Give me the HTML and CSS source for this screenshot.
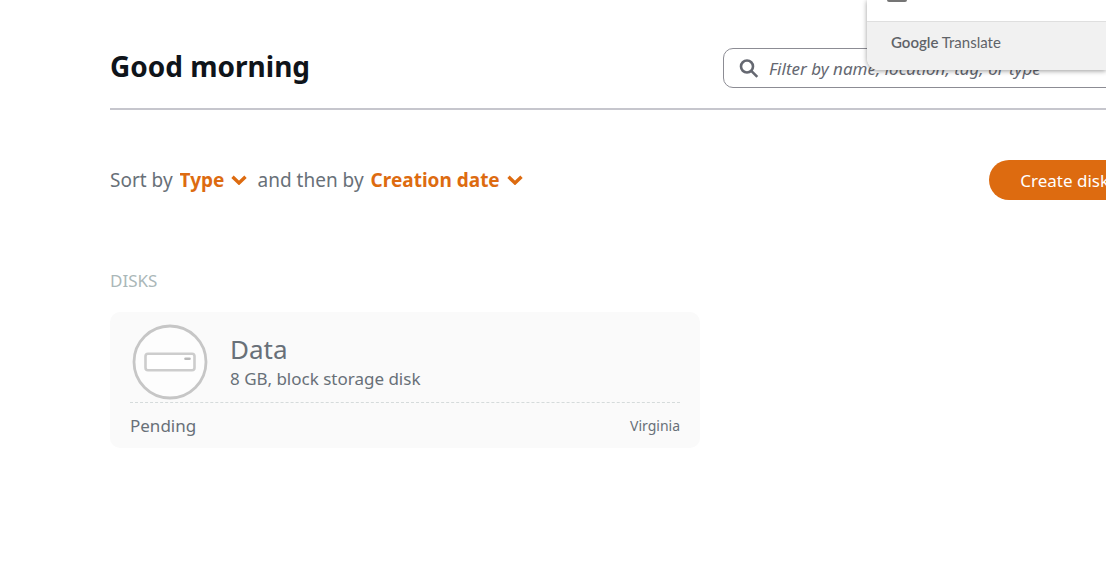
FILE: index.html
```html
<!DOCTYPE html>
<html lang="en">

<head>
    <meta charset="utf-8">
    <title>Home</title>
    <meta name="viewport" content="width=device-width, initial-scale=1">
    <link rel="stylesheet" href="styles.css">
</head>

<body>
    <main class="page">
        <header class="header">
            <h1>Good morning</h1>
            <label class="search">
                <svg class="search-icon" viewBox="0 0 20 20" aria-hidden="true">
                    <circle cx="8" cy="8.5" r="6"></circle>
                    <path d="M12.3 12.8L18.3 18.8"></path>
                </svg>
                <input type="search" aria-label="Filter" placeholder="Filter by name, location, tag, or type">
            </label>
        </header>

        <div class="toolbar">
            <div class="sort">
                <label for="sort1">Sort by</label>
                <span class="picker">
                    <select id="sort1"><option>Type</option></select>
                    <svg class="chevron" viewBox="0 0 16 10" aria-hidden="true"><path d="M1.5 1.8L8 8L14.5 1.8"></path></svg>
                </span>
                <label for="sort2" class="then">and then by</label>
                <span class="picker">
                    <select id="sort2"><option>Creation date</option></select>
                    <svg class="chevron" viewBox="0 0 16 10" aria-hidden="true"><path d="M1.5 1.8L8 8L14.5 1.8"></path></svg>
                </span>
            </div>
            <button type="button" class="create">Create disk</button>
        </div>

        <section>
            <h2>DISKS</h2>
            <article class="card">
                <div class="card-top">
                    <svg class="disk-icon" viewBox="0 0 80 80" aria-hidden="true">
                        <circle cx="40" cy="40" r="36" fill="#fdfdfd" stroke="#c6c6c6" stroke-width="2.8"></circle>
                        <rect x="15.5" y="31.7" width="49" height="16.5" rx="2.5" fill="#fff" stroke="#cdcdcd" stroke-width="2.6"></rect>
                        <path d="M55.5 36.7H59.5" stroke="#b9b9b9" stroke-width="2.6" stroke-linecap="round"></path>
                    </svg>
                    <div>
                        <h3>Data</h3>
                        <p class="details">8 GB, block storage disk</p>
                    </div>
                </div>
                <div class="card-bottom">
                    <span>Pending</span>
                    <span class="region">Virginia</span>
                </div>
            </article>
        </section>
    </main>

    <!-- translate popup -->
    <aside class="translate">
        <div class="translate-body"><span class="translate-icon"></span></div>
        <div class="translate-footer"><b>Google</b> Translate</div>
    </aside>
</body>

</html>
```

FILE: styles.css
```css
body {
    margin: 0;
    background-color: #fff;
    color: #687078;
    font-family: "Noto Sans", "Open Sans", sans-serif;
    font-size: 18px;
    overflow: hidden;
}

h1, h2, h3, p {
    margin: 0;
}

.page {
    min-width: 1030px;
    padding: 48px 0 48px 110px;
}

/* header */
.header {
    display: flex;
    align-items: flex-start;
    justify-content: space-between;
    padding-bottom: 20px;
    border-bottom: 2px solid #c6c6cd;
}

h1 {
    color: #0f141a;
    font-size: 28px;
    line-height: 36px;
    font-weight: 700;
}

.search {
    box-sizing: border-box;
    display: flex;
    align-items: center;
    gap: 10px;
    width: 417px;
    height: 40px;
    padding: 0 15px;
    border: 1px solid #8c8c94;
    border-radius: 10px;
}

.search-icon {
    width: 20px;
    height: 20px;
    fill: none;
    stroke: #656871;
    stroke-width: 2.6;
}

.search input {
    flex: 1;
    min-width: 0;
    padding: 0;
    border: none;
    outline: none;
    background: none;
    font: italic 17px "Noto Sans", sans-serif;
}

.search input::placeholder {
    color: #656871;
}

/* sort row */
.toolbar {
    display: flex;
    align-items: center;
    justify-content: space-between;
    margin-top: 50px;
}

.sort {
    display: flex;
    align-items: center;
    gap: 7px;
    font-size: 19px;
    line-height: 24px;
}

.then {
    margin-left: 4px;
}

.picker {
    display: flex;
    align-items: center;
    gap: 6px;
    color: #dd6b10;
}

.picker select {
    appearance: none;
    padding: 0;
    border: none;
    background: none;
    color: inherit;
    font: inherit;
    font-weight: 700;
}

.chevron {
    width: 16px;
    height: 10px;
    fill: none;
    stroke: #dd6b10;
    stroke-width: 3.4;
}

.create {
    height: 40px;
    padding: 0 31px;
    border: none;
    border-radius: 20px;
    background-color: #dd6b10;
    color: #fff;
    font: 400 17px "Noto Sans", sans-serif;
}

/* disks */
h2 {
    margin-top: 69px;
    color: #aab7b8;
    font-size: 17px;
    line-height: 24px;
    font-weight: 400;
}

.card {
    box-sizing: border-box;
    max-width: 590px;
    margin-top: 19px;
    padding: 10px 20px 0;
    border-radius: 10px;
    background-color: #fafafa;
}

.card-top {
    display: flex;
    align-items: center;
    gap: 20px;
}

.disk-icon {
    width: 80px;
    height: 80px;
}

h3 {
    font-size: 26px;
    line-height: 34px;
    font-weight: 400;
}

.details {
    font-size: 17px;
    line-height: 26px;
}

.card-bottom {
    display: flex;
    align-items: center;
    justify-content: space-between;
    height: 45px;
    border-top: 1px dashed #d5dbdb;
    font-size: 17px;
}

.region {
    font-size: 14px;
}

/* translate popup */
.translate {
    position: absolute;
    top: 0;
    right: 0;
    width: 239px;
    overflow: hidden;
    border-radius: 0 0 0 12px;
    background-color: #fff;
    box-shadow: 0 1px 5px rgba(0, 0, 0, .4);
    color: #5f6368;
    font-family: Lato, sans-serif;
    font-size: 15px;
}

.translate-body {
    height: 21px;
    padding-left: 20px;
    border-bottom: 1px solid #dfdfdf;
}

.translate-icon {
    display: block;
    width: 20px;
    height: 2px;
    border-radius: 0 0 2px 2px;
    background-color: #757575;
}

.translate-footer {
    padding: 8px 24px 16px;
    background-color: #f1f1f1;
    line-height: 24px;
}

.translate-footer b {
    font-weight: 600;
}
```
